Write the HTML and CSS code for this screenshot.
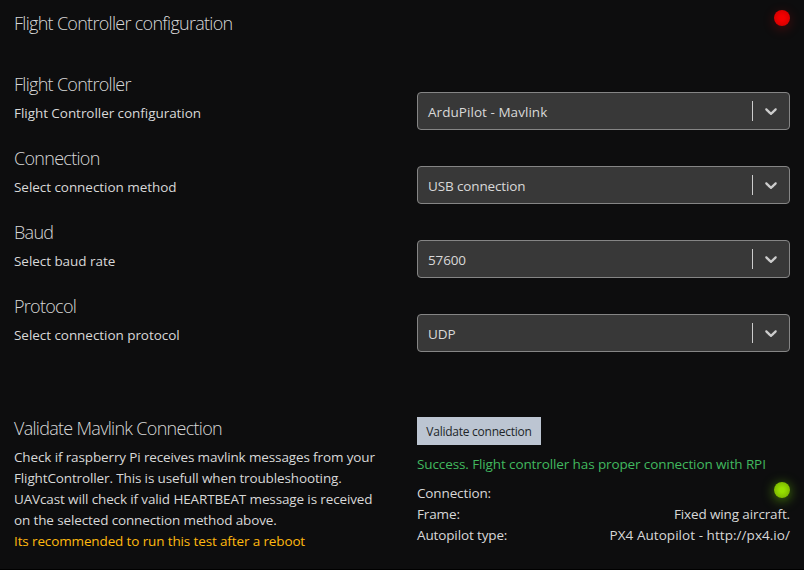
FILE: index.html
```
<!DOCTYPE html>
<html lang="en">
<head>
<meta charset="utf-8">
<title>Flight Controller configuration</title>
<link rel="stylesheet" href="styles.css">
</head>
<body>
<main class="panel">
  <header class="panel-head">
    <h1 class="heading">Flight Controller configuration</h1>
    <span class="led led-red"></span>
  </header>

  <section class="settings">
    <div class="row">
      <div class="label"><h2 class="heading">Flight Controller</h2><p>Flight Controller configuration</p></div>
      <div class="select"><span class="value wide">ArduPilot - Mavlink</span><span class="divider"></span><svg class="chevron" viewBox="0 0 20 20"><path d="M4.516 7.548c0.436-0.446 1.043-0.481 1.576 0l3.908 3.747 3.908-3.747c0.533-0.481 1.141-0.446 1.574 0 0.436 0.445 0.408 1.197 0 1.615-0.406 0.418-4.695 4.502-4.695 4.502-0.217 0.223-0.502 0.335-0.787 0.335s-0.57-0.112-0.789-0.335c0 0-4.287-4.084-4.695-4.502s-0.436-1.17 0-1.615z"/></svg></div>
    </div>
    <div class="row">
      <div class="label"><h2 class="heading">Connection</h2><p>Select connection method</p></div>
      <div class="select"><span class="value">USB connection</span><span class="divider"></span><svg class="chevron" viewBox="0 0 20 20"><path d="M4.516 7.548c0.436-0.446 1.043-0.481 1.576 0l3.908 3.747 3.908-3.747c0.533-0.481 1.141-0.446 1.574 0 0.436 0.445 0.408 1.197 0 1.615-0.406 0.418-4.695 4.502-4.695 4.502-0.217 0.223-0.502 0.335-0.787 0.335s-0.57-0.112-0.789-0.335c0 0-4.287-4.084-4.695-4.502s-0.436-1.17 0-1.615z"/></svg></div>
    </div>
    <div class="row">
      <div class="label"><h2 class="heading">Baud</h2><p>Select baud rate</p></div>
      <div class="select"><span class="value">57600</span><span class="divider"></span><svg class="chevron" viewBox="0 0 20 20"><path d="M4.516 7.548c0.436-0.446 1.043-0.481 1.576 0l3.908 3.747 3.908-3.747c0.533-0.481 1.141-0.446 1.574 0 0.436 0.445 0.408 1.197 0 1.615-0.406 0.418-4.695 4.502-4.695 4.502-0.217 0.223-0.502 0.335-0.787 0.335s-0.57-0.112-0.789-0.335c0 0-4.287-4.084-4.695-4.502s-0.436-1.17 0-1.615z"/></svg></div>
    </div>
    <div class="row">
      <div class="label"><h2 class="heading">Protocol</h2><p>Select connection protocol</p></div>
      <div class="select"><span class="value">UDP</span><span class="divider"></span><svg class="chevron" viewBox="0 0 20 20"><path d="M4.516 7.548c0.436-0.446 1.043-0.481 1.576 0l3.908 3.747 3.908-3.747c0.533-0.481 1.141-0.446 1.574 0 0.436 0.445 0.408 1.197 0 1.615-0.406 0.418-4.695 4.502-4.695 4.502-0.217 0.223-0.502 0.335-0.787 0.335s-0.57-0.112-0.789-0.335c0 0-4.287-4.084-4.695-4.502s-0.436-1.17 0-1.615z"/></svg></div>
    </div>
  </section>

  <section class="validate">
    <div class="label">
      <h2 class="heading">Validate Mavlink Connection</h2>
      <p>Check if raspberry Pi receives mavlink messages from your<br>FlightController. This is usefull when troubleshooting.<br>UAVcast will check if valid HEARTBEAT message is received<br>on the selected connection method above.<br><span class="warn">Its recommended to run this test after a reboot</span></p>
    </div>
    <div class="result">
      <button class="btn" type="button">Validate connection</button>
      <p class="success">Success. Flight controller has proper connection with RPI</p>
      <dl class="facts">
        <div><dt>Connection:</dt><dd><span class="led led-green"></span></dd></div>
        <div><dt>Frame:</dt><dd>Fixed wing aircraft.</dd></div>
        <div><dt>Autopilot type:</dt><dd class="wide">PX4 Autopilot - http://px4.io/</dd></div>
      </dl>
    </div>
  </section>
</main>
</body>
</html>
```
FILE: styles.css
```
* { box-sizing: border-box; }
body {
  margin: 0;
  background: #0d0d0e;
  color: #d8d8d8;
  font: 13.5px/21px "Segoe UI", "Open Sans", "Noto Sans", sans-serif;
  letter-spacing: -0.13px;
}
h1, h2, p, dl, dd { margin: 0; }
.panel {
  height: 570px;
  padding: 11px 14px 0;
  border-bottom: 1px solid #000;
}
.panel-head {
  display: flex;
  justify-content: space-between;
  height: 61px;
}
.heading {
  font-size: 18px;
  font-weight: 300;
  line-height: 24px;
  letter-spacing: -0.71px;
  color: #d8d8d8;
}
.row, .validate {
  display: grid;
  grid-template-columns: 403px 373px;
}
.row { height: 74px; }
.row p { letter-spacing: -0.05px; }
.label p { margin-top: 7px; }
.select {
  display: flex;
  align-items: center;
  height: 38px;
  margin-top: 20px;
  padding-left: 10px;
  background: #383838;
  border: 1px solid #858585;
  border-radius: 4px;
}
.value { flex: 1; padding-top: 2px; }
.wide { letter-spacing: 0.05px; }
.divider { width: 1px; height: 20px; background: #ccc; }
.chevron { width: 20px; height: 20px; margin: 0 8px; fill: #ccc; }
.validate { margin-top: 48px; }
.btn {
  display: block;
  width: 124px;
  height: 28px;
  margin-top: 1px;
  padding: 2px 0 0;
  border: 0;
  background: #bcc5d2;
  color: #212529;
  font: 12px/20px "Segoe UI", "Open Sans", "Noto Sans", sans-serif;
  letter-spacing: -0.25px;
}
.success { margin-top: 9px; letter-spacing: -0.11px; color: #41b95f; }
.facts { margin-top: 8px; }
.facts div { display: flex; justify-content: space-between; height: 21px; }
.warn { color: #ffb90f; }
.led {
  display: block;
  width: 16px;
  height: 16px;
  border-radius: 50%;
}
.panel-head .led { margin-top: -1px; }
.led-red {
  background: radial-gradient(circle, #f50000 20%, #c80000 100%);
  box-shadow: 0 3px 12px rgba(255, 0, 0, .25);
}
.led-green {
  margin-top: -1px;
  background: radial-gradient(circle, #97e000 20%, #70a500 100%);
  box-shadow: 0 2px 12px rgba(137, 255, 0, .5);
}
```
